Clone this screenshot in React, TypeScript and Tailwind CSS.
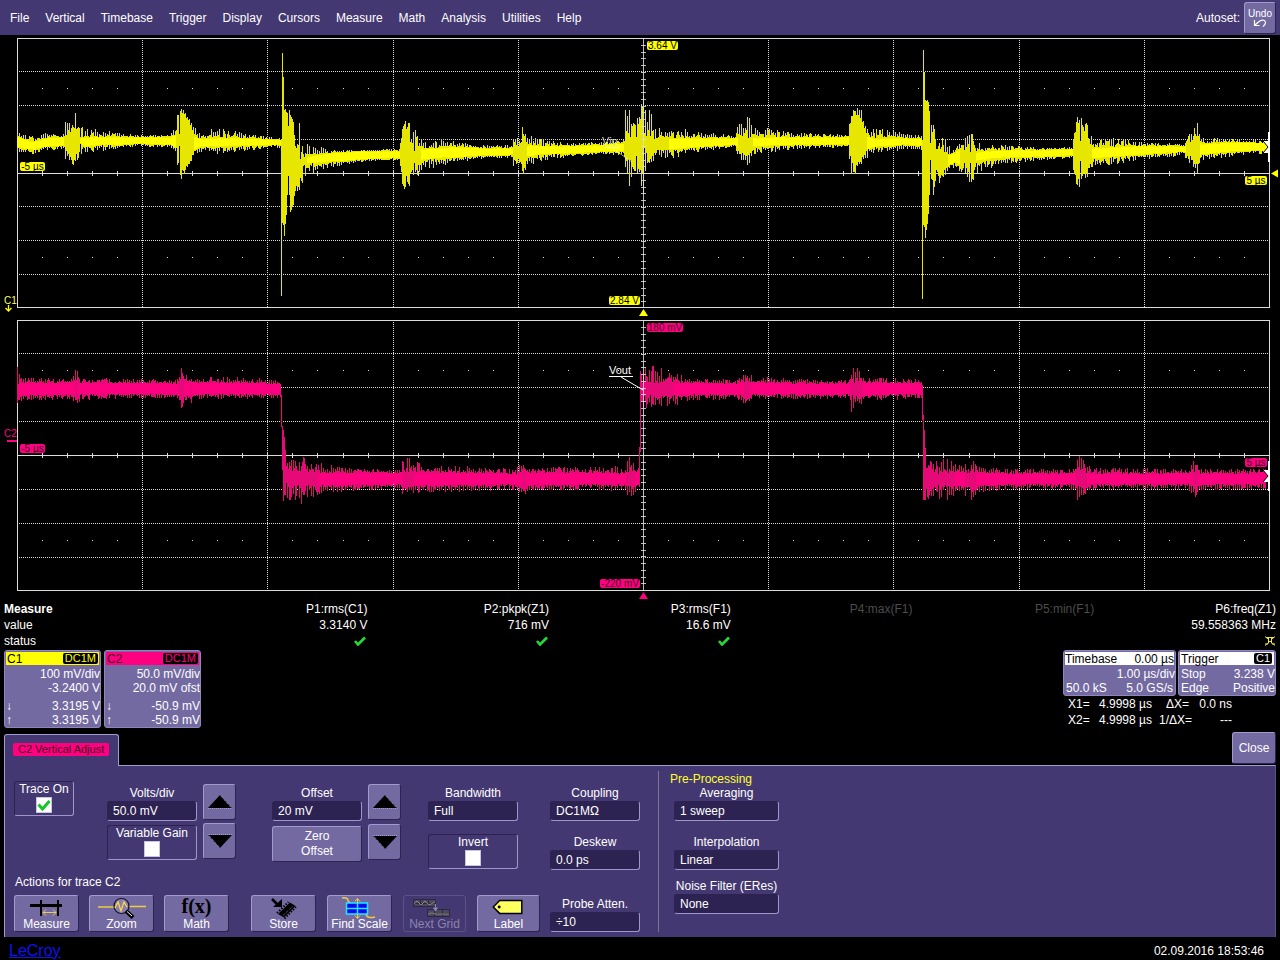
import React from 'react';
import clsx from 'clsx';

const MENU = [
  'File', 'Vertical', 'Timebase', 'Trigger', 'Display', 'Cursors',
  'Measure', 'Math', 'Analysis', 'Utilities', 'Help'
];

const YELLOW = '#ffff00';
const PINK = '#ff0080';

// x, core top, core bottom, spike top, spike bottom
type EnvelopePoint = [number, number, number, number, number];

const C1_TRACE: EnvelopePoint[] = [
  [17, 137, 148, 133, 153], [33, 142, 150, 137, 154], [45, 138, 147, 133, 151], [63, 137, 146, 134, 149],
  [64, 138, 146, 120, 163], [69, 133, 155, 121, 160], [75, 132, 158, 112, 167], [78, 139, 142, 125, 160],
  [85, 137, 147, 130, 152], [100, 137, 145, 129, 152], [120, 137, 145, 133, 148], [140, 137, 144, 135, 147],
  [170, 137, 145, 134, 147], [175, 135, 148, 127, 152], [177, 120, 160, 108, 175], [181, 112, 168, 109, 179],
  [190, 125, 160, 116, 165], [194, 136, 150, 128, 155], [200, 139, 147, 132, 151], [216, 138, 147, 127, 155],
  [235, 138, 146, 131, 151], [260, 139, 146, 136, 149], [280, 140, 145, 138, 148],
  [281, 140, 296, 140, 296], [282, 53, 223, 53, 223], [283, 77, 225, 77, 225], [284, 110, 236, 110, 236],
  [286, 113, 215, 105, 213], [288, 150, 172, 106, 178], [290, 115, 210, 115, 212], [293, 122, 205, 120, 205],
  [295, 152, 185, 140, 192], [299, 155, 188, 124, 193], [301, 158, 165, 145, 188], [304, 158, 164, 145, 178],
  [315, 155, 163, 146, 174], [330, 153, 162, 150, 168], [345, 152, 161, 150, 164], [370, 151, 159, 150, 161],
  [399, 151, 158, 149, 160], [401, 140, 170, 125, 185], [405, 130, 175, 121, 190], [412, 148, 165, 127, 182],
  [418, 150, 163, 135, 175], [422, 149, 160, 141, 168], [440, 148, 158, 140, 168], [455, 147, 158, 142, 162],
  [480, 148, 156, 145, 159], [511, 148, 155, 145, 158], [514, 148, 155, 130, 174], [519, 149, 156, 132, 165],
  [523, 138, 170, 126, 178], [527, 145, 157, 135, 166], [545, 146, 154, 140, 160], [570, 146, 154, 143, 157],
  [600, 145, 152, 142, 154], [623, 143, 152, 140, 155], [625, 138, 160, 112, 172], [629, 142, 155, 111, 184],
  [635, 130, 167, 120, 175], [640, 122, 168, 112, 178], [643, 100, 172, 90, 200], [645, 120, 165, 105, 176],
  [650, 136, 155, 112, 172], [655, 140, 150, 125, 162], [680, 138, 149, 128, 156], [700, 138, 147, 133, 151],
  [735, 138, 145, 135, 147], [738, 138, 150, 120, 160], [749, 132, 158, 115, 168], [753, 138, 147, 128, 155],
  [770, 137, 146, 129, 152], [800, 137, 145, 133, 149], [848, 137, 145, 134, 147], [850, 125, 155, 110, 170],
  [853, 112, 167, 106, 178], [861, 120, 158, 109, 168], [866, 136, 150, 125, 158], [875, 139, 147, 130, 152],
  [890, 138, 146, 128, 152], [905, 138, 145, 133, 149], [921, 139, 146, 136, 150],
  [922, 140, 299, 140, 299], [923, 50, 225, 50, 225], [924, 72, 227, 72, 227], [925, 100, 238, 100, 238],
  [928, 103, 212, 97, 220], [930, 152, 160, 125, 170], [933, 128, 190, 123, 195], [936, 155, 168, 135, 175],
  [939, 150, 178, 136, 183], [945, 155, 168, 140, 175], [955, 153, 162, 148, 170], [963, 146, 168, 138, 178],
  [972, 143, 172, 130, 184], [976, 152, 161, 142, 172], [985, 151, 160, 146, 170], [1000, 150, 158, 145, 164],
  [1040, 150, 157, 148, 160], [1072, 149, 156, 147, 158], [1074, 138, 170, 122, 182], [1079, 122, 176, 116, 190],
  [1088, 140, 168, 125, 180], [1092, 148, 159, 140, 167], [1115, 147, 157, 138, 164], [1140, 146, 155, 142, 160],
  [1184, 146, 152, 144, 155], [1186, 146, 154, 127, 173], [1191, 144, 156, 132, 165], [1197, 138, 165, 124, 173],
  [1201, 144, 155, 138, 160], [1230, 142, 152, 139, 157], [1266, 143, 150, 140, 153]
];

const C2_TRACE: EnvelopePoint[] = [
  [17, 380, 398, 368, 405], [22, 383, 395, 378, 400], [68, 383, 394, 379, 400], [73, 383, 395, 375, 402],
  [76, 382, 396, 367, 405], [80, 383, 394, 378, 400], [120, 383, 394, 379, 398], [176, 384, 394, 380, 398],
  [178, 382, 396, 372, 402], [181, 378, 400, 368, 411], [185, 383, 395, 376, 402], [190, 382, 396, 371, 404],
  [195, 383, 394, 378, 399], [225, 383, 394, 377, 399], [279, 384, 394, 380, 398],
  [280, 384, 397, 384, 397], [281, 395, 427, 395, 427], [282, 426, 470, 426, 470], [283, 430, 501, 430, 501],
  [284, 437, 495, 437, 495], [286, 472, 483, 462, 502], [288, 472, 483, 460, 512], [292, 472, 485, 458, 502],
  [297, 473, 485, 456, 498], [301, 473, 484, 453, 510], [305, 473, 485, 460, 498], [320, 473, 485, 464, 495],
  [345, 473, 485, 468, 491], [399, 473, 484, 470, 489], [405, 472, 486, 454, 498], [412, 472, 486, 460, 493],
  [425, 473, 485, 466, 492], [450, 473, 485, 466, 492], [510, 474, 484, 469, 490], [519, 474, 485, 466, 492],
  [524, 472, 487, 460, 498], [529, 473, 485, 468, 490], [600, 473, 484, 467, 490], [624, 474, 484, 467, 491],
  [629, 472, 486, 453, 503], [635, 473, 485, 467, 496], [638, 470, 485, 463, 490],
  [639, 447, 487, 447, 487], [640, 371, 452, 371, 452], [641, 374, 402, 374, 402], [642, 382, 396, 368, 408],
  [650, 383, 396, 365, 406], [665, 383, 395, 370, 405], [678, 383, 395, 374, 404], [690, 383, 394, 379, 401],
  [735, 384, 394, 380, 398], [741, 383, 395, 375, 401], [747, 381, 397, 367, 407], [752, 383, 394, 377, 399],
  [800, 384, 394, 379, 399], [847, 384, 394, 380, 398], [851, 381, 397, 367, 411], [861, 382, 397, 370, 405],
  [866, 383, 395, 377, 400], [890, 383, 394, 378, 400], [921, 384, 394, 380, 398],
  [922, 385, 420, 385, 420], [923, 415, 500, 415, 500], [924, 430, 500, 430, 500], [926, 472, 484, 464, 500],
  [928, 472, 484, 462, 510], [932, 473, 485, 459, 497], [945, 473, 485, 459, 500], [960, 473, 486, 466, 493],
  [967, 473, 486, 462, 497], [972, 472, 487, 455, 500], [977, 473, 485, 467, 493], [1010, 474, 484, 469, 489],
  [1073, 474, 484, 469, 490], [1078, 471, 486, 456, 503], [1085, 473, 485, 460, 496], [1092, 474, 484, 468, 489],
  [1188, 474, 484, 469, 489], [1196, 472, 487, 456, 499], [1200, 474, 484, 469, 490], [1266, 474, 484, 469, 489]
];

// Small seeded generator so that the noise is the same on every render
const createNoise = (seed: number) => {
  let state = seed;
  return () => {
    state = (state * 16807) % 2147483647;
    return state / 2147483647;
  };
};

const buildTrace = (points: EnvelopePoint[], seed: number) => {
  const noise = createNoise(seed);
  let core = '';
  let spikes = '';
  for (let i = 0; i < points.length - 1; i++) {
    const a = points[i];
    const b = points[i + 1];
    for (let x = a[0]; x < b[0]; x++) {
      const t = (x - a[0]) / (b[0] - a[0]);
      const [top, bottom, spikeTop, spikeBottom] = [1, 2, 3, 4].map((k) => a[k] + (b[k] - a[k]) * t);
      const isBurst = spikeBottom - spikeTop > 32;
      const isEdge = spikeTop === top && spikeBottom === bottom;
      const long = noise() < (x % 2 ? 0.85 : 0.2);
      const up = long ? 0.3 + noise() * 0.8 : noise() * 0.35;
      const down = long ? 0.3 + noise() * 0.8 : noise() * 0.35;
      let y1 = top + (spikeTop - top) * up;
      let y2 = bottom + (spikeBottom - bottom) * down;
      // gaps between the ringing cycles
      if (isBurst && !isEdge && !long && noise() < 0.2) {
        const centre = (top + bottom) / 2;
        y1 = centre - 5 - noise() * 7;
        y2 = centre + 5 + noise() * 7;
      }
      spikes += `M${x + 0.5} ${Math.round(y1)}V${Math.round(y2)}`;
      if (!isBurst) {
        core += `M${x + 0.5} ${Math.round(top + noise())}V${Math.round(bottom - noise())}`;
      }
    }
  }
  return { core, spikes };
};

interface BadgeProps {
  x: number;
  y: number;
  width: number;
  color: string;
  textColor: string;
  children: React.ReactNode;
}

const Badge: React.FC<BadgeProps> = ({ x, y, width, color, textColor, children }) => (
  <g>
    <rect x={x} y={y} width={width} height={9} rx={2} fill={color} />
    <text x={x + width / 2} y={y + 8} textAnchor="middle" fill={textColor} fontSize={10}>
      {children}
    </text>
  </g>
);

interface ScopeGridProps {
  label: string;
  top: number;
  bottom: number;
  color: string;
  dimColor: string;
  trace: EnvelopePoint[];
  seed: number;
  markerY: number;
  children: React.ReactNode;
}

const ScopeGrid: React.FC<ScopeGridProps> = ({
  label,
  top,
  bottom,
  color,
  dimColor,
  trace,
  seed,
  markerY,
  children
}) => {
  const left = 17;
  const right = 1269;
  const height = bottom - top;
  const middle = top + 135;
  const column = (i: number) => Math.round(left + (i * (right - left)) / 50) + 0.5;
  const row = (i: number) => top + Math.floor((i * height) / 16);
  const { core, spikes } = buildTrace(trace, seed);

  return (
    <svg viewBox={`0 ${top - 3} 1280 282`} className="block w-full" role="img" aria-label={label}>
      <g shapeRendering="crispEdges" fill="none" stroke="#dcdcdc">
        {[2, 4, 6, 10, 12, 14].map((i) => (
          <path key={i} d={`M${left} ${row(i) + 0.5}H${right}`} strokeDasharray="1 1" />
        ))}
        {[5, 10, 15, 20, 30, 35, 40, 45].map((i) => (
          <path key={i} d={`M${column(i)} ${top}V${bottom}`} strokeDasharray="1 1" />
        ))}
        {Array.from({ length: 49 }, (_, i) => i + 1).map((i) => (
          <React.Fragment key={i}>
            <path d={`M${column(i)} ${middle - 2}v5`} />
            {i % 5 !== 0 && <path d={`M${column(i)} ${row(3)}v1M${column(i)} ${row(13)}v1`} />}
          </React.Fragment>
        ))}
        <path d={`M${left} ${middle + 0.5}H${right}`} />
        <rect x={left + 0.5} y={top + 0.5} width={right - left} height={height - 1} />
      </g>
      <g shapeRendering="crispEdges" fill="none">
        <path d={spikes} stroke={dimColor} />
        <path d={core} stroke={color} />
        <path d={`M643.5 ${top}V${bottom}`} stroke="#dcdcdc" opacity={0.85} />
        {Array.from({ length: 39 }, (_, i) => i + 1).map((i) => (
          <path key={i} d={`M641 ${Math.round(top + i * 6.75) + 0.5}h5`} stroke="#dcdcdc" opacity={0.85} />
        ))}
      </g>
      {/* cursor at the right edge */}
      <path d={`M1268 ${markerY - 15}h2v30h-2zM1264 ${markerY - 6}h6v12h-6z`} fill="#fff" />
      <path d={`M1260 ${markerY - 4}h3v-2l5 6l-5 6v-2h-3z`} fill={color} />
      <path d={`M1263 ${markerY - 6}l5 6l-5 6`} fill="none" stroke="#000" />
      <path d={`M639 ${bottom + 8}l4.500 -7l4.500 7z`} fill={color} />
      {children}
    </svg>
  );
};

const CheckMark: React.FC<{ className?: string }> = ({ className }) => (
  <svg viewBox="0 0 12 10" className={className} aria-hidden="true">
    <path d="M1 5l3 3.500L11 1.500" fill="none" stroke="#22dd33" strokeWidth={2.6} />
  </svg>
);

const MEASURES = [
  { name: 'P1:rms(C1)', value: '3.3140 V', status: 'ok' },
  { name: 'P2:pkpk(Z1)', value: '716 mV', status: 'ok' },
  { name: 'P3:rms(F1)', value: '16.6 mV', status: 'ok' },
  { name: 'P4:max(F1)', value: '', status: 'off' },
  { name: 'P5:min(F1)', value: '', status: 'off' },
  { name: 'P6:freq(Z1)', value: '59.558363 MHz', status: 'unstable' }
];

const MeasureTable = () => (
  <div className="px-1 pt-[2px]">
    <table className="w-full table-fixed border-collapse leading-4">
      <thead>
        <tr>
          <th className="p-0 text-left text-[12px] font-bold">Measure</th>
          {MEASURES.map((m) => (
            <th
              key={m.name}
              className={clsx('p-0 text-right font-normal', m.status === 'off' && 'text-[#4c4c4c]')}
            >
              {m.name}
            </th>
          ))}
        </tr>
      </thead>
      <tbody>
        <tr>
          <th className="p-0 text-left font-normal">value</th>
          {MEASURES.map((m) => (
            <td key={m.name} className="p-0 text-right">{m.value}</td>
          ))}
        </tr>
        <tr>
          <th className="p-0 text-left font-normal">status</th>
          {MEASURES.map((m) => (
            <td key={m.name} className="p-0">
              {m.status === 'ok' && <CheckMark className="ml-auto mr-px h-[10px] w-3" />}
              {m.status === 'unstable' && (
                <svg viewBox="0 0 12 10" className="ml-auto h-[10px] w-3" aria-hidden="true">
                  <path
                    d="M1 .5L4 3M11 .5L8 3M1 9.500L4 7M11 9.500L8 7M2 1.500h8M4.500 1.500v6M7.500 1.500v6M4.500 5.500h3M1 8h3M8 8h3"
                    fill="none"
                    stroke="#e8e840"
                  />
                </svg>
              )}
            </td>
          ))}
        </tr>
      </tbody>
    </table>
  </div>
);

interface ChannelCardProps {
  name: string;
  headClass: string;
  tagClass: string;
  scale: string;
  offset: string;
  cursor: string;
}

const cardClass = 'rounded-[3px] border border-[#8f86bc] bg-[#736aa2] text-left leading-[14px] whitespace-nowrap';

const ChannelCard: React.FC<ChannelCardProps> = ({ name, headClass, tagClass, scale, offset, cursor }) => (
  <button className={clsx(cardClass, 'h-[78px] w-[97px]')}>
    <span className={clsx('mx-px mt-px mb-[2px] flex h-[13px] items-center justify-between px-px', headClass)}>
      <span>{name}</span>
      <span className={clsx('rounded-[2px] bg-black px-[2px] text-[11px] leading-[11px]', tagClass)}>DC1M</span>
    </span>
    <span className="block text-right">{scale}</span>
    <span className="mb-1 block text-right">{offset}</span>
    <span className="flex justify-between pl-px"><span>↓</span>{cursor}</span>
    <span className="flex justify-between pl-px"><span>↑</span>{cursor}</span>
  </button>
);

const raised =
  'rounded-[3px] border border-t-[#a39bcd] border-l-[#a39bcd] border-r-[#2c2350] border-b-[#2c2350] bg-[#736aa2]';
const sunken =
  'rounded-[3px] border border-t-[#2c2350] border-l-[#2c2350] border-r-[#9f96ca] border-b-[#9f96ca]';

interface FieldProps {
  id: string;
  label: string;
  value: string;
  select?: boolean;
  className?: string;
}

const Field: React.FC<FieldProps> = ({ id, label, value, select, className }) => {
  const box = clsx(sunken, 'block h-5 w-full appearance-none bg-[#2d2352] px-[5px] text-white outline-none');
  return (
    <div className={className}>
      <label htmlFor={id} className="block h-[15px] text-center leading-[15px] whitespace-nowrap">
        {label}
      </label>
      {select ? (
        <select id={id} defaultValue={value} className={box}>
          <option>{value}</option>
        </select>
      ) : (
        <input id={id} type="text" defaultValue={value} className={box} />
      )}
    </div>
  );
};

interface CheckFieldProps {
  label: string;
  checked?: boolean;
  className?: string;
}

const CheckField: React.FC<CheckFieldProps> = ({ label, checked, className }) => (
  <label className={clsx(sunken, 'flex h-[35px] flex-col items-center leading-[15px] whitespace-nowrap', className)}>
    {label}
    <span className="grid">
      <input
        type="checkbox"
        defaultChecked={checked}
        className="col-start-1 row-start-1 size-4 appearance-none border border-[#c9c5de] bg-white"
      />
      {checked && (
        <svg viewBox="0 0 16 16" className="pointer-events-none col-start-1 row-start-1 size-4" aria-hidden="true">
          <path d="M2.500 7.500l4 4.500L13.500 4" fill="none" stroke="#10c820" strokeWidth={3} />
        </svg>
      )}
    </span>
  </label>
);

const ArrowButton: React.FC<{ label: string; down?: boolean }> = ({ label, down }) => (
  <button aria-label={label} className={clsx(raised, 'flex h-9 w-[33px] items-center justify-center')}>
    <svg viewBox="0 0 26 14" className={clsx('h-[14px] w-[26px]', down && 'rotate-180')} aria-hidden="true">
      <path d="M1 13L13 0l12 13z" fill="#000" />
      <path d="M1 13.500h24L13 0" fill="none" stroke="#a39bcd" strokeDasharray="1 1" />
    </svg>
  </button>
);

interface ActionButtonProps {
  label: string;
  disabled?: boolean;
  narrow?: boolean;
  children: React.ReactNode;
}

const ActionButton: React.FC<ActionButtonProps> = ({ label, disabled, narrow, children }) => (
  <button
    disabled={disabled}
    className={clsx(
      'flex h-[37px] flex-col items-center whitespace-nowrap',
      narrow ? 'w-[63px]' : 'w-[65px]',
      disabled ? 'rounded-[3px] border border-[#5c5287] text-[#8c84ae]' : raised
    )}
  >
    {children}
    <span className="leading-[14px]">{label}</span>
  </button>
);

const iconClass = 'h-[21px] w-16 shrink-0 overflow-visible';

const MeasureIcon = () => (
  <svg viewBox="0 0 64 21" className={iconClass} aria-hidden="true">
    <path d="M15 8h32v3H15zM25 4h2v16h-2zM42 4h2v16h-2z" fill="#000" />
    <path d="M28 16.500h13M31 13.500l-3 3 3 3M38 13.500l3 3-3 3" fill="none" stroke="#e8c860" />
  </svg>
);

const ZoomIcon = () => (
  <svg viewBox="0 0 64 21" className={iconClass} aria-hidden="true">
    <path d="M8 11h17M39 10.500h17" stroke="#f0cc40" strokeWidth={1.5} />
    <circle cx={31.5} cy={10} r={7.5} fill="#8880b4" stroke="#15102a" strokeWidth={1.2} />
    <path d="M25 12l3-6 3 9 3-9 3 5" fill="none" stroke="#ffd838" strokeWidth={1.3} />
    <path d="M36 15l7 6.500" stroke="#000" strokeWidth={4} />
    <path d="M37 15.500l5 4.500" stroke="#fff" />
  </svg>
);

const StoreIcon = () => (
  <svg viewBox="0 0 64 21" className={iconClass} aria-hidden="true">
    <path d="M20 3l6 6" stroke="#000" strokeWidth={2.6} />
    <path d="M30 3v8h-9z" fill="#000" />
    <path d="M26 18L38 6.500l5.500 3.500L32 21.500z" fill="#000" />
    <path d="M25 17L36.500 6M32.500 22.500L44 11" stroke="#000" strokeWidth={2} strokeDasharray="1.500 1.500" />
    <path d="M31 19.500l10-9.500" stroke="#77709c" strokeDasharray="1 1" />
  </svg>
);

const FindScaleIcon = () => (
  <svg viewBox="0 0 64 21" className={iconClass} aria-hidden="true">
    <path d="M14 2q6-1 6 3l3 3M38 18q1 5 9 3" fill="none" stroke="#f0cc40" strokeWidth={1.5} />
    <rect x={18.500} y={7} width={21} height={11} fill="#0808f0" stroke="#20e8ff" strokeWidth={1.5} />
    <path d="M18 12.500h22M29.500 7v11" stroke="#20e8ff" strokeWidth={1.500} />
    <path d="M29.500 3v4M29.500 18v4M27 5.500l2.500-3 2.500 3M27 19.500l2.500 3 2.500-3" fill="none" stroke="#f0cc40" />
  </svg>
);

const NextGridIcon = () => (
  <svg viewBox="0 0 64 21" className={iconClass} aria-hidden="true">
    <g fill="#4d4766" stroke="#2c2842">
      <rect x={10.500} y={3.500} width={22} height={7} />
      <path d="M10 7.500h23M17.500 3v8M25.500 3v8" />
      <rect x={24.500} y={13.500} width={22} height={7} />
      <path d="M24 17.500h23M31.500 13v8M39.500 13v8" />
    </g>
    <path d="M11 8l3-3 4 4 4-4 4 4 6-3M25 18l4-1 4 1h13" fill="none" stroke="#8d8960" />
    <path d="M32.500 8v5M30.500 12h4l-2 3z" stroke="#8c84ae" fill="#8c84ae" />
  </svg>
);

const LabelIcon = () => (
  <svg viewBox="0 0 62 21" className="h-[21px] w-[61px] shrink-0 overflow-visible" aria-hidden="true">
    <path d="M15.500 11l6.500-6.500h22.500v13H22z" fill="#ffff60" stroke="#000" strokeWidth={1.5} />
    <circle cx={21.500} cy={11} r={1.500} fill="#000" />
  </svg>
);

const AdjustPanel = () => (
  <section className="mx-1 flex min-h-[172px] border-t border-l border-[#a39bcd] border-r border-r-[#5c5287] bg-[#443872] pr-4 pl-[9px]">
    <div className="flex flex-col justify-between pb-[5px]">
      <div className="flex items-start">
        <CheckField label="Trace On" checked className="mt-[15px] w-[60px]" />

        <div className="mt-5 ml-[33px] flex w-[90px] flex-col gap-1">
          <Field id="volts" label="Volts/div" value="50.0 mV" />
          <CheckField label="Variable Gain" />
        </div>
        <div className="mt-[18px] ml-[6px] flex flex-col gap-[3px]">
          <ArrowButton label="Increase volts per division" />
          <ArrowButton label="Decrease volts per division" down />
        </div>

        <div className="mt-5 ml-9 flex w-[90px] flex-col gap-[5px]">
          <Field id="offset" label="Offset" value="20 mV" />
          <button className={clsx(raised, 'h-9 leading-[15px]')}>
            Zero
            <br />
            Offset
          </button>
        </div>
        <div className="mt-[18px] ml-[6px] flex flex-col gap-1">
          <ArrowButton label="Increase offset" />
          <ArrowButton label="Decrease offset" down />
        </div>

        <div className="mt-5 ml-[27px] flex w-[90px] flex-col gap-[13px]">
          <Field id="bandwidth" label="Bandwidth" value="Full" select />
          <CheckField label="Invert" />
        </div>
      </div>

      <div>
        <h2 className="mb-[5px] pl-px leading-4">Actions for trace C2</h2>
        <div className="flex gap-[22px]">
          <div className="flex gap-[10px]">
            <ActionButton label="Measure"><MeasureIcon /></ActionButton>
            <ActionButton label="Zoom"><ZoomIcon /></ActionButton>
            <ActionButton label="Math">
              <span className="h-[21px] font-['Liberation_Serif',serif] text-[20px] leading-[21px] font-bold text-black">
                f(x)
              </span>
            </ActionButton>
          </div>
          <div className="flex gap-[11px]">
            <ActionButton label="Store"><StoreIcon /></ActionButton>
            <ActionButton label="Find Scale"><FindScaleIcon /></ActionButton>
            <ActionButton label="Next Grid" disabled narrow><NextGridIcon /></ActionButton>
            <ActionButton label="Label" narrow><LabelIcon /></ActionButton>
          </div>
        </div>
      </div>
    </div>

    <div className="ml-[10px] flex w-[90px] flex-col justify-between pt-5 pb-[5px]">
      <div className="flex flex-col gap-[14px]">
        <Field id="coupling" label="Coupling" value="DC1MΩ" select />
        <Field id="deskew" label="Deskew" value="0.0 ps" />
      </div>
      <Field id="probe" label="Probe Atten." value="÷10" />
    </div>

    <div className="my-[5px] ml-[18px] border-l border-[#7d7589] pl-[11px]">
      <h2 className="h-[15px] leading-4 text-[#ffff30]">Pre-Processing</h2>
      <div className="ml-1 flex w-[105px] flex-col gap-[14px]">
        <Field id="averaging" label="Averaging" value="1 sweep" />
        <Field id="interpolation" label="Interpolation" value="Linear" select />
        <Field id="noise" label="Noise Filter (ERes)" value="None" select className="-mt-[5px]" />
      </div>
    </div>
  </section>
);

export default function App() {
  return (
    <div className="min-h-screen bg-black font-['Liberation_Sans',Arial,sans-serif] text-[12px] text-white">
      <header className="flex h-[35px] items-center justify-between bg-[#443872] pr-1 pl-[10px]">
        <nav className="flex gap-4">
          {MENU.map((item) => (
            <button key={item}>{item}</button>
          ))}
        </nav>
        <div className="flex items-center gap-1">
          <span>Autoset:</span>
          <button className={clsx(raised, 'flex h-8 w-8 flex-col items-center justify-center text-[10px] leading-[11px]')}>
            Undo
            <svg viewBox="0 0 14 8" className="h-2 w-[14px]" aria-hidden="true">
              <path d="M1.500 1v5.500h5M2 6L6 2.500q6-3 6.500 1 0 2-2.500 4" fill="none" stroke="#fff" strokeWidth={1.200} />
            </svg>
          </button>
        </div>
      </header>

      <main>
        <ScopeGrid
          label="Channel 1"
          top={38}
          bottom={308}
          color={YELLOW}
          dimColor="#e6e600"
          trace={C1_TRACE}
          seed={4711}
          markerY={147}
        >
          <text x={602} y={145} fill="#fff" fontSize={11} opacity={0.8}>Vin</text>
          <path d="M604 147.500h16M612 148l20 14" fill="none" stroke="#fff" opacity={0.6} />
          <Badge x={20} y={162} width={25} color={YELLOW} textColor="#000">-5 µs</Badge>
          <Badge x={647} y={41} width={31} color={YELLOW} textColor="#000">3.64 V</Badge>
          <Badge x={609} y={296} width={31} color={YELLOW} textColor="#000">2.84 V</Badge>
          <Badge x={1245} y={176} width={22} color={YELLOW} textColor="#000">5 µs</Badge>
          <path d="M1271 173.500l7-4v8z" fill={YELLOW} />
          <text x={4} y={304} fill="#ffff60" fontSize={10}>C1</text>
          <path d="M8.500 305v6M5.500 308l3 3 3-3" fill="none" stroke={YELLOW} strokeWidth={1.3} />
        </ScopeGrid>

        <ScopeGrid
          label="Channel 2"
          top={320}
          bottom={591}
          color={PINK}
          dimColor="#e60a78"
          trace={C2_TRACE}
          seed={1999}
          markerY={476}
        >
          <text x={609} y={374} fill="#fff" fontSize={11}>Vout</text>
          <path d="M609 376.500h24M621 377l22 13" fill="none" stroke="#fff" />
          <Badge x={20} y={444} width={25} color={PINK} textColor="#40001c">-5 µs</Badge>
          <Badge x={647} y={323} width={36} color={PINK} textColor="#40001c">180 mV</Badge>
          <Badge x={600} y={579} width={40} color={PINK} textColor="#40001c">-220 mV</Badge>
          <Badge x={1245} y={458} width={22} color={PINK} textColor="#40001c">5 µs</Badge>
          <text x={4} y={437} fill={PINK} fontSize={10}>C2</text>
          <path d="M7 440h10v2H7z" fill={PINK} />
        </ScopeGrid>

        <MeasureTable />

        <div className="flex justify-between px-1 pt-px">
          <div className="flex flex-col justify-between">
            <div className="flex gap-[3px]">
              <ChannelCard
                name="C1"
                headClass="bg-[#ffff00] text-black"
                tagClass="text-[#ffff00]"
                scale="100 mV/div"
                offset="-3.2400 V"
                cursor="3.3195 V"
              />
              <ChannelCard
                name="C2"
                headClass="bg-[#ff0080] text-[#40001c]"
                tagClass="text-[#ff0080]"
                scale="50.0 mV/div"
                offset="20.0 mV ofst"
                cursor="-50.9 mV"
              />
            </div>
            <div className="-mb-px w-[115px] rounded-t-[3px] border border-b-0 border-[#a39bcd] bg-[#443872] pt-2 pb-[10px] pl-2">
              <span className="block w-fit rounded-[2px] bg-[#ff0080] px-[5px] text-[11px] leading-[13px] whitespace-nowrap text-[#40001c]">
                C2 Vertical Adjust
              </span>
            </div>
          </div>

          <div className="flex flex-col pb-px">
            <div className="flex gap-[2px]">
              <button className={clsx(cardClass, 'h-[46px] w-[113px]')}>
                <span className="mx-px mt-px mb-[2px] flex h-[13px] items-center justify-between bg-white text-black">
                  <span>Timebase</span>
                  <span>0.00 µs</span>
                </span>
                <span className="block text-right">1.00 µs/div</span>
                <span className="flex justify-between px-[2px]"><span>50.0 kS</span><span>5.0 GS/s</span></span>
              </button>
              <button className={clsx(cardClass, 'h-[46px] w-[98px]')}>
                <span className="mx-px mt-px mb-[2px] flex h-[13px] items-center justify-between bg-white pr-[2px] pl-px text-black">
                  <span>Trigger</span>
                  <span className="rounded-[2px] bg-black px-[2px] text-[11px] leading-[11px] text-white">C1</span>
                </span>
                <span className="flex justify-between pl-[2px]"><span>Stop</span><span>3.238 V</span></span>
                <span className="flex justify-between pl-[2px]"><span>Edge</span><span>Positive</span></span>
              </button>
            </div>
            <div className="mb-1 grid grid-cols-[31px_60px_30px_43px] pl-[5px] leading-4 whitespace-nowrap">
              <span>X1=</span>
              <span>4.9998 µs</span>
              <span className="text-right">ΔX=</span>
              <span className="text-right">0.0 ns</span>
              <span>X2=</span>
              <span>4.9998 µs</span>
              <span className="text-right">1/ΔX=</span>
              <span className="text-right">---</span>
            </div>
            <button className={clsx(raised, 'ml-auto h-8 w-11')}>Close</button>
          </div>
        </div>

        <AdjustPanel />
      </main>

      <footer className="flex h-[22px] items-center justify-between pr-4 pl-[9px]">
        <a href="#lecroy" className="pt-[5px] text-[16px] leading-4 text-[#1010f0] underline">LeCroy</a>
        <time dateTime="2016-09-02T18:53:46" className="pt-[6px]">02.09.2016 18:53:46</time>
      </footer>
    </div>
  );
}
